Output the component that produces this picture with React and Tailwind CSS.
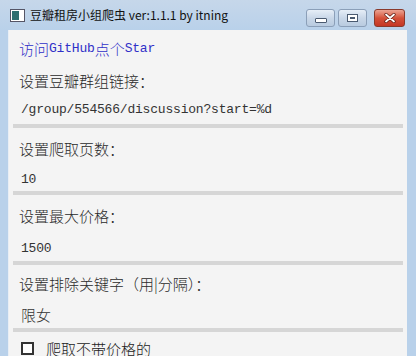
import React from 'react';

const CJK = '"Noto Sans CJK SC", sans-serif';

function Latin({ children }) {
  return (
    <span className="font-['Liberation_Mono',monospace] text-[13px] tracking-[-0.2px]">{children}</span>
  );
}

function Field({ label, value, labelH, inputH }) {
  return (
    <div className="flex flex-col">
      <div className="flex items-center pl-[10px] text-[#2a2a2a] text-[15px] font-light leading-none" style={{ height: labelH }}>
        {label}
      </div>
      <div className="flex items-center pl-[12px] text-[#333] text-[15px] font-light leading-none" style={{ height: inputH }}>
        {value}
      </div>
      <div className="h-[4px] mx-[4px] bg-[#d6d6d6]" />
    </div>
  );
}

function TitleButton({ kind }) {
  if (kind === 'close') {
    return (
      <div className="w-[31px] h-[18px] rounded-[3px] border border-[#8a3a2c] bg-gradient-to-b from-[#eaa494] via-[#d4513a] to-[#c43726] flex items-center justify-center">
        <svg width="12" height="10" viewBox="0 0 12 10">
          <path d="M2 1.5 L10 8.5 M10 1.5 L2 8.5" stroke="#5a1a10" strokeWidth="3.2" strokeLinecap="round" />
          <path d="M2 1.5 L10 8.5 M10 1.5 L2 8.5" stroke="#fff" strokeWidth="1.8" strokeLinecap="round" />
        </svg>
      </div>
    );
  }
  return (
    <div className="w-[29px] h-[18px] rounded-[3px] border border-[#8b9fb8] bg-gradient-to-b from-[#e6eef7] via-[#c9d7e8] to-[#b9cbe0] flex items-center justify-center">
      {kind === 'min' ? (
        <div className="w-[12px] h-[5px] mt-[5px] rounded-[1px] border border-[#4a5a70] bg-white" />
      ) : (
        <div className="w-[11px] h-[8px] border border-[#4a5a70] bg-white flex items-center justify-center">
          <div className="w-[5px] h-[2px] bg-[#4a5a70]" />
        </div>
      )}
    </div>
  );
}

export default function App() {
  return (
    <div className="w-[416px] h-[356px] overflow-hidden bg-[#b9d1ea] flex flex-col" style={{ fontFamily: CJK }}>
      {/* Title bar */}
      <div className="h-[30px] shrink-0 flex items-center bg-gradient-to-b from-[#c6d7ea] to-[#b9d1ea]">
        <div className="ml-[10px] w-[15px] h-[13px] border border-[#556] bg-white flex items-center pl-[1px]">
          <div className="w-[7px] h-[9px] bg-[#2f6f70]" />
        </div>
        <span className="ml-[5px] text-[12px] text-[#111] leading-none">豆瓣租房小组爬虫 ver:1.1.1 by itning</span>
        <div className="ml-auto mr-[11px] flex items-center gap-[3px] self-start mt-[9px]">
          <TitleButton kind="min" />
          <TitleButton kind="max" />
          <div className="w-[1px]" />
          <TitleButton kind="close" />
        </div>
      </div>

      {/* Client area */}
      <div className="flex-1 ml-[8px] mr-[9px] bg-[#f4f4f4] border-l border-[#e8eef5] flex flex-col overflow-hidden">
        <div className="h-[36px] shrink-0 flex items-center pl-[10px] text-[#3030c8] text-[15px] font-light leading-none">
          访问<Latin>GitHub</Latin>点个<Latin>Star</Latin>
        </div>
        <Field label="设置豆瓣群组链接：" value={<Latin>/group/554566/discussion?start=%d</Latin>} labelH={28} inputH={30} />
        <Field label="设置爬取页数：" value={<Latin>10</Latin>} labelH={40} inputH={23} />
        <Field label="设置最大价格：" value={<Latin>1500</Latin>} labelH={40} inputH={26} />
        <Field label="设置排除关键字（用|分隔）：" value="限女" labelH={36} inputH={27} />
        <div className="h-[32px] shrink-0 flex items-center pl-[12px] gap-[12px] text-[15px] font-light text-[#222] leading-none">
          <div className="w-[13px] h-[13px] border-2 border-[#333] bg-white" />
          <span>爬取不带价格的</span>
        </div>
      </div>
    </div>
  );
}
